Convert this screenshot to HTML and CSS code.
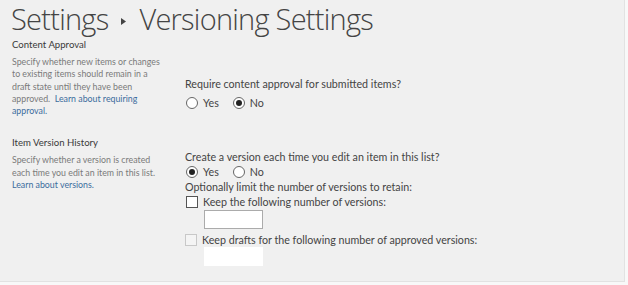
FILE: index.html
```html
<!DOCTYPE html>
<html>
<head>
<meta charset="utf-8">
<link rel="stylesheet" href="styles.css">
</head>
<body>
<div class="panel">
  <h1 class="title"><span>Settings</span><svg class="sep" width="5" height="7" viewBox="0 0 5 7"><path d="M0 0 L5 3.5 L0 7 Z" fill="#444"/></svg><span>Versioning Settings</span></h1>

  <div class="section s1">
    <div class="left">
      <div class="sec-title">Content Approval</div>
      <div class="desc">Specify whether new items or changes<br>to existing items should remain in a<br>draft state until they have been<br>approved.&nbsp; <a class="link" href="#">Learn about requiring<br>approval.</a></div>
    </div>
    <div class="right r1">
      <div class="line">Require content approval for submitted items?</div>
      <div class="line radios gap4">
        <span class="opt"><span class="radio"></span>Yes</span>
        <span class="opt"><span class="radio on"></span>No</span>
      </div>
    </div>
  </div>

  <div class="section s2">
    <div class="left">
      <div class="sec-title">Item Version History</div>
      <div class="desc">Specify whether a version is created<br>each time you edit an item in this list.<br><a class="link" href="#">Learn about versions.</a></div>
    </div>
    <div class="right r2">
      <div class="line">Create a version each time you edit an item in this list?</div>
      <div class="line radios">
        <span class="opt"><span class="radio on"></span>Yes</span>
        <span class="opt"><span class="radio"></span>No</span>
      </div>
      <div class="line">Optionally limit the number of versions to retain:</div>
      <div class="line check"><span class="box"></span>Keep the following number of versions:</div>
      <div class="input"></div>
      <div class="line check dis gap3"><span class="box"></span>Keep drafts for the following number of approved versions:</div>
      <div class="input disabled"></div>
    </div>
  </div>
</div>
</body>
</html>
```

FILE: styles.css
```css
html, body {
  margin: 0;
  padding: 0;
  background: #f8f8f8;
}
body {
  font-family: "Lato", "Open Sans", sans-serif;
  color: #444;
}
.panel {
  width: 625px;
  height: 282px;
  background: #f0f0f0;
  border-right: 1px solid #e2e2e2;
  border-bottom: 1px solid #e2e2e2;
  box-sizing: border-box;
  overflow: hidden;
}
.title {
  margin: 0;
  height: 38px;
  padding-left: 11px;
  font-family: "Open Sans", sans-serif;
  font-weight: 300;
  font-size: 29px;
  line-height: 36px;
  color: #444;
  display: flex;
  align-items: center;
  gap: 13px;
  letter-spacing: -0.75px;
}
.sep {
  margin-top: 4px;
}
.section {
  display: flex;
}
.s1 {
  padding-bottom: 19px;
}
.left {
  width: 173px;
  padding-left: 12px;
  box-sizing: border-box;
  flex: none;
}
.sec-title {
  font-size: 9.6px;
  line-height: 14px;
  color: #3a3a3a;
}
.desc {
  margin-top: 4px;
  font-size: 8.8px;
  line-height: 12.3px;
  color: #7a7a7a;
  white-space: nowrap;
}
.link {
  color: #3b6c9d;
  text-decoration: none;
}
.right {
  padding-left: 12px;
  font-size: 10.7px;
  color: #444;
}
.r1 {
  padding-top: 38px;
}
.r2 {
  padding-top: 13px;
}
.line {
  line-height: 15px;
  height: 15px;
  white-space: nowrap;
  display: flex;
  align-items: center;
}
.gap4 {
  margin-top: 4px;
}
.gap3 {
  margin-top: 3px;
}
.radios {
  gap: 14px;
  padding-left: 1px;
}
.opt {
  display: flex;
  align-items: center;
  gap: 5px;
}
.radio {
  width: 12px;
  height: 12px;
  border: 1px solid #666;
  border-radius: 50%;
  box-sizing: border-box;
  background: #fff;
  display: flex;
  align-items: center;
  justify-content: center;
}
.radio.on::after {
  content: "";
  width: 6px;
  height: 6px;
  border-radius: 50%;
  background: #222;
}
.check {
  gap: 5px;
  padding-left: 1px;
}
.box {
  width: 12px;
  height: 12px;
  border: 1px solid #555;
  background: #fff;
  box-sizing: border-box;
  flex: none;
}
.dis {
  padding-left: 0;
}
.dis .box {
  border-color: #c8c8c8;
  background: #f4f4f4;
}
.input {
  margin-top: 1px;
  margin-left: 19px;
  width: 59px;
  height: 19px;
  border: 1px solid #ababab;
  background: #fff;
  box-sizing: border-box;
}
.input.disabled {
  margin-top: 0;
  border-color: #fff;
}
```
